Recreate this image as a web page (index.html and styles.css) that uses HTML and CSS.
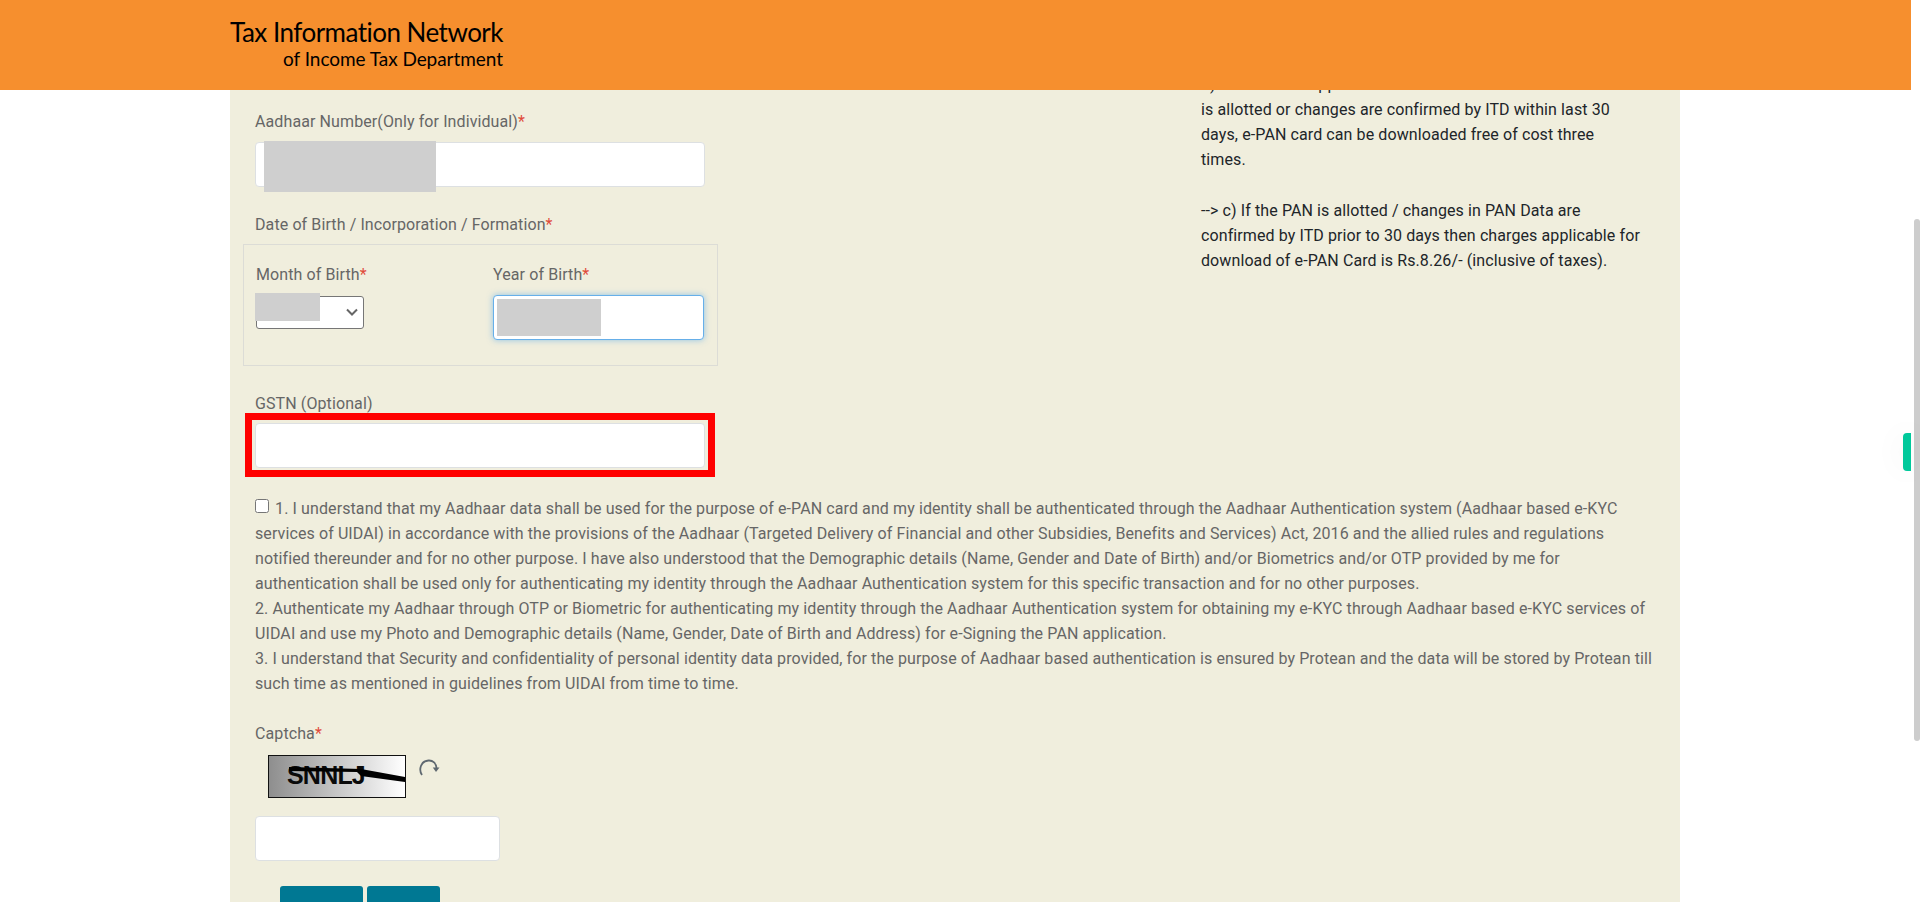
FILE: index.html
```html
<!DOCTYPE html>
<html>
<head>
  <meta charset="UTF-8">
  <meta name="viewport" content="width=device-width, initial-scale=1.0">
  <title>e-PAN Card Download</title>
  <link rel="stylesheet" href="styles.css">
</head>
<body>
  <header class="topbar">
    <div class="logo">
      <div class="logo-main">Tax Information Network</div>
      <div class="logo-sub">of Income Tax Department</div>
    </div>
  </header>

  <div class="scroll-thumb"></div>
  <div class="side-tab"></div>

  <main class="panel">
    <div class="top-row">
      <div class="left-col">
        <label class="field-label">Aadhaar Number(Only for Individual)<span class="req">*</span></label>
        <div class="input-wrap first-input">
          <input class="text-input" type="text">
          <div class="redact redact-aadhaar"></div>
        </div>

        <label class="field-label date-label">Date of Birth / Incorporation / Formation<span class="req">*</span></label>
        <div class="dob-box">
          <div class="dob-month">
            <label class="field-label">Month of Birth<span class="req">*</span></label>
            <div class="input-wrap">
              <select class="month-select"><option></option></select>
              <svg class="select-chevron" width="12" height="8" viewBox="0 0 12 8">
                <path d="M1 1.5 L6 6.5 L11 1.5" fill="none" stroke="#666" stroke-width="2"/>
              </svg>
              <div class="redact redact-month"></div>
            </div>
          </div>
          <div class="dob-year">
            <label class="field-label">Year of Birth<span class="req">*</span></label>
            <div class="input-wrap">
              <input class="text-input is-focused" type="text">
              <div class="redact redact-year"></div>
            </div>
          </div>
        </div>

        <label class="field-label gstn-label">GSTN (Optional)</label>
        <div class="input-wrap highlighted">
          <input class="text-input" type="text">
        </div>
      </div>

      <div class="right-col">
        <p>b) For the PAN applications submitted to Protean where PAN is allotted or changes are confirmed by ITD within last 30 days, e-PAN card can be downloaded free of cost three times.</p>
        <p class="gap-above">--&gt; c) If the PAN is allotted / changes in PAN Data are confirmed by ITD prior to 30 days then charges applicable for download of e-PAN Card is Rs.8.26/- (inclusive of taxes).</p>
      </div>
    </div>

    <div class="consent">
      <input class="consent-check" type="checkbox">
      1. I understand that my Aadhaar data shall be used for the purpose of e-PAN card and my identity shall be authenticated through the Aadhaar Authentication system (Aadhaar based e-KYC services of UIDAI) in accordance with the provisions of the Aadhaar (Targeted Delivery of Financial and other Subsidies, Benefits and Services) Act, 2016 and the allied rules and regulations notified thereunder and for no other purpose. I have also understood that the Demographic details (Name, Gender and Date of Birth) and/or Biometrics and/or OTP provided by me for authentication shall be used only for authenticating my identity through the Aadhaar Authentication system for this specific transaction and for no other purposes.<br>
      2. Authenticate my Aadhaar through OTP or Biometric for authenticating my identity through the Aadhaar Authentication system for obtaining my e-KYC through Aadhaar based e-KYC services of UIDAI and use my Photo and Demographic details (Name, Gender, Date of Birth and Address) for e-Signing the PAN application.<br>
      3. I understand that Security and confidentiality of personal identity data provided, for the purpose of Aadhaar based authentication is ensured by Protean and the data will be stored by Protean till such time as mentioned in guidelines from UIDAI from time to time.
    </div>

    <label class="field-label captcha-label">Captcha<span class="req">*</span></label>
    <div class="captcha-row">
      <div class="captcha-img">
        <span class="captcha-text">SNNLJ</span>
        <svg class="captcha-strike" width="136" height="41" viewBox="0 0 136 41">
          <path d="M20 11 L92 13 L136 21 L136 26 L92 20 L88 16 L20 15 Z" fill="#000"/>
        </svg>
      </div>
      <svg class="refresh-icon" width="22" height="18" viewBox="0 0 22 18">
        <path d="M4 16 C0.5 11 2.5 2 10.5 1.5 C15 1.2 18 4.5 18.5 9" fill="none" stroke="#5f6870" stroke-width="1.8"/>
        <path d="M14.8 8.5 L21.5 8.5 L18 13 Z" fill="#5f6870"/>
      </svg>
    </div>
    <input class="text-input captcha-input" type="text">

    <div class="button-row">
      <button class="btn btn-submit" type="button"></button>
      <button class="btn btn-reset" type="button"></button>
    </div>
  </main>
</body>
</html>
```

FILE: styles.css
```css
html, body {
  margin: 0;
  padding: 0;
  height: 902px;
  overflow: hidden;
  background: #fff;
}

body {
  font-family: Roboto, "Liberation Sans", sans-serif;
  font-size: 16px;
  line-height: 25px;
  letter-spacing: 0.1px;
  color: #666;
}

.topbar {
  position: fixed;
  top: 0;
  left: 0;
  width: 1911px;
  height: 90px;
  background: #f68f2e;
  z-index: 10;
  padding: 16px 0 0 230px;
  box-sizing: border-box;
}

.logo {
  width: 273px;
  font-family: Lato, sans-serif;
  color: #000;
  text-align: right;
  white-space: nowrap;
}

.logo-main {
  font-size: 26px;
  line-height: 32px;
  letter-spacing: -0.52px;
}

.logo-sub {
  font-size: 19px;
  line-height: 21px;
  letter-spacing: -0.05px;
}

.scroll-thumb {
  position: fixed;
  top: 219px;
  right: 0;
  width: 6px;
  height: 522px;
  background: #cdcdcd;
  border-radius: 3px;
}

.side-tab {
  position: fixed;
  top: 433px;
  left: 1903px;
  width: 8px;
  height: 38px;
  background: #00c99b;
  border-radius: 4px 0 0 4px;
  box-shadow: 0 0 30px rgba(0, 0, 0, 0.08);
}

.panel {
  width: 1450px;
  margin-left: 230px;
  padding: 72px 25px 0;
  box-sizing: border-box;
  height: 1000px;
  background: #f0eedd;
}

.top-row {
  display: flex;
}

.left-col {
  width: 450px;
  padding-top: 37px;
}

.right-col {
  width: 440px;
  margin-left: 496px;
  color: #212529;
}

.right-col p {
  margin: 0;
}

.gap-above {
  margin-top: 26px !important;
}

.field-label {
  display: block;
}

.req {
  color: #e04b3a;
}

.input-wrap {
  position: relative;
  margin-top: 7px;
}

.first-input {
  margin-top: 8px;
}

.text-input {
  display: block;
  width: 100%;
  height: 45px;
  box-sizing: border-box;
  border: 1px solid #dde0e2;
  border-radius: 4px;
  background: #fff;
  outline: none;
}

.is-focused {
  border-color: #66afe9;
  box-shadow: 0 0 6px rgba(102, 175, 233, 0.7);
}

.redact {
  position: absolute;
  background: #cfcfcf;
}

.redact-aadhaar {
  left: 9px;
  top: -1px;
  width: 172px;
  height: 51px;
}

.date-label {
  margin-top: 25px;
}

.dob-box {
  display: flex;
  width: 475px;
  height: 122px;
  margin: 7px 0 0 -12px;
  padding: 17px 12px 0 12px;
  box-sizing: border-box;
  border: 1px solid #dcdcd6;
}

.dob-month {
  width: 237px;
}

.dob-year {
  width: 211px;
}

.dob-month .input-wrap {
  margin-top: 9px;
}

.month-select {
  display: block;
  width: 108px;
  height: 33px;
  background: #fff;
  border: 1px solid #767676;
  border-radius: 3px;
  font-family: inherit;
  appearance: none;
}

.select-chevron {
  position: absolute;
  left: 90px;
  top: 12px;
}

.redact-month {
  left: -1px;
  top: -3px;
  width: 65px;
  height: 28px;
}

.dob-year .input-wrap {
  margin-top: 8px;
}

.redact-year {
  left: 4px;
  top: 4px;
  width: 104px;
  height: 37px;
}

.gstn-label {
  margin-top: 25px;
}

.highlighted::after {
  content: "";
  position: absolute;
  left: -10px;
  top: -10px;
  width: 470px;
  height: 64px;
  box-sizing: border-box;
  border: 7px solid #f00;
}

.consent {
  margin-top: 28px;
  width: 1400px;
}

.consent-check {
  margin: 0 2px 0 0;
  width: 14px;
  height: 14px;
  vertical-align: 1px;
}

.captcha-label {
  margin-top: 25px;
}

.captcha-row {
  display: flex;
  align-items: flex-start;
  margin: 9px 0 0 13px;
}

.captcha-img {
  position: relative;
  width: 138px;
  height: 43px;
  box-sizing: border-box;
  border: 1px solid #111;
  background: linear-gradient(to right, #8e8e8e, #fff);
  overflow: hidden;
}

.captcha-text {
  position: absolute;
  left: 18px;
  top: 7px;
  font-family: "Liberation Sans", sans-serif;
  font-weight: bold;
  font-size: 25px;
  line-height: 25px;
  letter-spacing: -0.8px;
  color: #0a0a0a;
}

.captcha-strike {
  position: absolute;
  left: 0;
  top: 0;
}

.refresh-icon {
  margin: 4px 0 0 12px;
}

.captcha-input {
  width: 245px;
  margin-top: 18px;
}

.button-row {
  display: flex;
  gap: 4px;
  margin: 25px 0 0 25px;
}

.btn {
  height: 40px;
  border: none;
  border-radius: 3px;
  background: #007893;
  padding: 0;
}

.btn-submit {
  width: 83px;
}

.btn-reset {
  width: 73px;
}
```
